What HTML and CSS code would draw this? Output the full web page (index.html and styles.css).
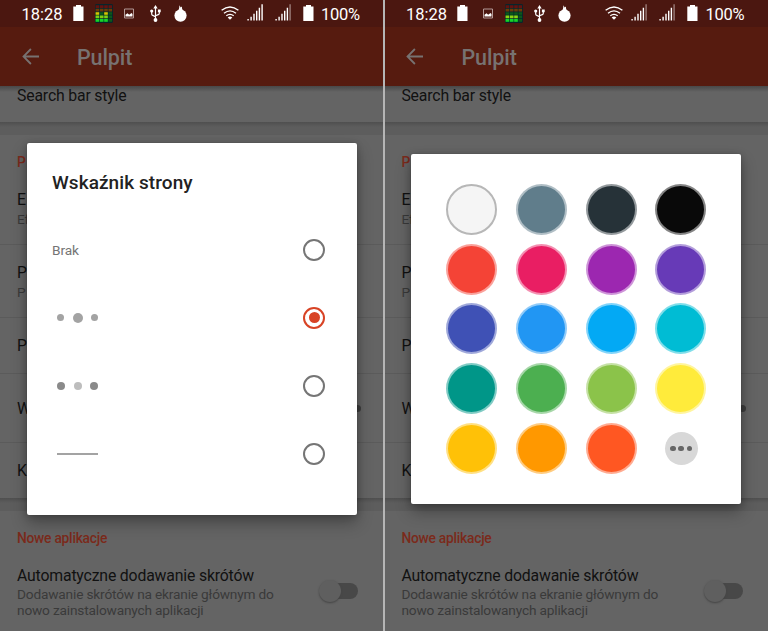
FILE: index.html
```html
<!DOCTYPE html>
<html lang="pl">
<head>
<meta charset="utf-8">
<title>Pulpit</title>
<link rel="stylesheet" href="styles.css">
</head>
<body>
<svg class="defs" aria-hidden="true">
  <symbol id="battery" viewBox="0 0 11 16"><path fill="#fff" d="M3 0h5v1.500h2.500V16H.3V1.500H3z"/></symbol>
  <symbol id="equalizer" viewBox="0 0 18 19">
    <rect width="18" height="19" rx="1.500" fill="#06262c"/>
    <path stroke="#65120f" stroke-width="2.600" stroke-dasharray="3.600 .7" d="M.6 2.600h16.800"/>
    <path stroke="#6d3a08" stroke-width="2.600" stroke-dasharray="3.600 .7" d="M.6 6.100h16.800"/>
    <path stroke="#0b591a" stroke-width="2.600" stroke-dasharray="3.600 .7" d="M.6 9.500h16.800M.6 12.900h16.800M.6 16.400h16.800"/>
    <path stroke="#14d52b" stroke-width="2.600" stroke-dasharray="3.600 .7" d="M.6 16.400h12.600"/>
  </symbol>
  <symbol id="picture" viewBox="0 0 10 11"><path fill="none" stroke="#b39a97" d="M.5 1h9v9h-9z"/><path fill="#fff" d="M1.500 8.500V6.800l2-1.600 1.700 1.500L7.500 5l1 1v2.500z"/></symbol>
  <symbol id="usb" viewBox="0 0 11 17"><g fill="none" stroke="#fff" stroke-width="1.200"><path d="M5.500 2v13M1.700 6v3.100q0 1 1 1.300l2.800 1.300M9.300 6v2.200q0 1-1 1.400l-2.800 1.200"/></g><path fill="#fff" d="M5.500 0 7.700 3.500H3.300zM7.900 4.500h2.800v2.800H7.900z"/><circle cx="1.700" cy="6" r="1.600" fill="#fff"/><circle cx="5.500" cy="15" r="1.900" fill="#fff"/></symbol>
  <symbol id="bulb" viewBox="0 0 13 17"><circle cx="6.500" cy="10.600" r="6.100" fill="#fff"/><path fill="#fff" d="M3.600 6C5 4.800 5.300 3 5.400.2L6.700 2.500 7.900 1.500Q7.600 4.700 9.500 6z"/></symbol>
  <symbol id="wifi" viewBox="0 0 18 14"><g fill="none" stroke="#fff" stroke-width="1.400"><path d="M.6 4.300Q9-2.400 17.400 4.300"/><path d="M3 7.200q6-4.700 12 0"/><path d="M5.300 9.800q3.700-2.800 7.400 0"/></g><path fill="#fff" d="M6.700 11.400q2.300-1.700 4.600 0L9 13.800z"/></symbol>
  <symbol id="signal" viewBox="0 0 16 17"><path fill="#fff" d="M.4 15h1.400v1.500H.4zM3.400 12.700h1.400v3.800H3.400zM6.300 9.700h1.400v6.800H6.300zM9 6.700h1.400v9.800H9zM11.700 3.700h1.400v12.800h-1.400z"/></symbol>
  <symbol id="back" viewBox="0 0 17 17"><path fill="none" stroke="#777271" stroke-width="1.800" d="M8.900 1 1.500 8.500 8.900 16M1.600 8.500H17"/></symbol>
</svg>

<main class="screens">
  <section class="phone">
    <header class="status">
      <span class="time">18:28</span>
      <svg class="i-batt"><use href="#battery"/></svg>
      <svg class="i-eq"><use href="#equalizer"/><path stroke="#d8c400" stroke-width="2.600" d="M.6 9.500h3.600M9.200 9.500h3.600"/><path stroke="#7fcf12" stroke-width="2.600" stroke-dasharray="3.600 .7" d="M.6 12.900h12.600"/></svg>
      <svg class="i-pic"><use href="#picture"/></svg>
      <svg class="i-usb"><use href="#usb"/></svg>
      <svg class="i-bulb"><use href="#bulb"/></svg>
      <svg class="i-wifi"><use href="#wifi"/></svg>
      <svg class="i-sig"><use href="#signal"/><path fill="#fff" d="M14.400.3h1.400v16.200h-1.400z"/></svg>
      <svg class="i-sig second"><use href="#signal"/><path fill="#9b7d79" d="M14.400.3h1.400v16.200h-1.400z"/></svg>
      <svg class="i-batt charge"><use href="#battery"/></svg>
      <span class="percent">100%</span>
    </header>
    <div class="appbar"><svg class="back"><use href="#back"/></svg><h1>Pulpit</h1></div>
    <div class="content">
      <div class="card search"><span class="label">Search bar style</span></div>
      <div class="gap"></div>
      <div class="card settings">
        <div class="category">P</div>
        <div class="row double first"><span class="label">E</span><span class="summary">Ef</span></div>
        <div class="row double"><span class="label">P</span><span class="summary">P</span></div>
        <div class="row"><span class="label">P</span></div>
        <div class="row tall"><span class="label">W</span><i class="dot"></i></div>
        <div class="row"><span class="label">K</span></div>
      </div>
      <div class="gap"></div>
      <div class="card apps">
        <div class="category">Nowe aplikacje</div>
        <div class="toggle-row">
          <div><div class="label">Automatyczne dodawanie skrótów</div><div class="summary">Dodawanie skrótów na ekranie głównym do<br>nowo zainstalowanych aplikacji</div></div>
          <span class="switch"></span>
        </div>
      </div>
    </div>
    <div class="dialog indicator">
      <h2>Wskaźnik strony</h2>
      <div class="option"><span>Brak</span><i class="radio"></i></div>
      <div class="option"><span class="dots big"><b></b><b></b><b></b></span><i class="radio on"></i></div>
      <div class="option"><span class="dots fade"><b></b><b></b><b></b></span><i class="radio"></i></div>
      <div class="option"><span class="line"></span><i class="radio"></i></div>
    </div>
  </section>

  <div class="separator"></div>

  <section class="phone right">
    <header class="status">
      <span class="time">18:28</span>
      <svg class="i-batt"><use href="#battery"/></svg>
      <svg class="i-pic"><use href="#picture"/></svg>
      <svg class="i-eq"><use href="#equalizer"/><path stroke="#8cd313" stroke-width="2.600" stroke-dasharray="3.600 .7" d="M.6 12.900h12.600"/></svg>
      <svg class="i-usb"><use href="#usb"/></svg>
      <svg class="i-bulb"><use href="#bulb"/></svg>
      <svg class="i-wifi"><use href="#wifi"/></svg>
      <svg class="i-sig"><use href="#signal"/><path fill="#9b7d79" d="M14.400.3h1.400v16.200h-1.400z"/></svg>
      <svg class="i-sig second"><use href="#signal"/><path fill="#9b7d79" d="M14.400.3h1.400v16.200h-1.400z"/></svg>
      <svg class="i-batt charge"><use href="#battery"/></svg>
      <span class="percent">100%</span>
    </header>
    <div class="appbar"><svg class="back"><use href="#back"/></svg><h1>Pulpit</h1></div>
    <div class="content">
      <div class="card search"><span class="label">Search bar style</span></div>
      <div class="gap"></div>
      <div class="card settings">
        <div class="category">P</div>
        <div class="row double first"><span class="label">E</span><span class="summary">Ef</span></div>
        <div class="row double"><span class="label">P</span><span class="summary">P</span></div>
        <div class="row"><span class="label">P</span></div>
        <div class="row tall"><span class="label">W</span><i class="dot"></i></div>
        <div class="row"><span class="label">K</span></div>
      </div>
      <div class="gap"></div>
      <div class="card apps">
        <div class="category">Nowe aplikacje</div>
        <div class="toggle-row">
          <div><div class="label">Automatyczne dodawanie skrótów</div><div class="summary">Dodawanie skrótów na ekranie głównym do<br>nowo zainstalowanych aplikacji</div></div>
          <span class="switch"></span>
        </div>
      </div>
    </div>
    <div class="dialog palette">
      <i class="swatch white"></i><i class="swatch slate"></i><i class="swatch charcoal"></i><i class="swatch black"></i>
      <i class="swatch red"></i><i class="swatch pink"></i><i class="swatch purple"></i><i class="swatch violet"></i>
      <i class="swatch indigo"></i><i class="swatch blue"></i><i class="swatch sky"></i><i class="swatch cyan"></i>
      <i class="swatch teal"></i><i class="swatch green"></i><i class="swatch lime"></i><i class="swatch yellow"></i>
      <i class="swatch amber"></i><i class="swatch orange"></i><i class="swatch deep"></i><span class="more"><b></b><b></b><b></b></span>
    </div>
  </section>
</main>
</body>
</html>
```

FILE: styles.css
```css
* { box-sizing: border-box; }
body { margin: 0; font-family: Roboto, "Liberation Sans", sans-serif; background: #646464; }
h1, h2 { margin: 0; font-weight: 500; }
.defs { position: absolute; width: 0; height: 0; }
.screens { display: grid; grid-template-columns: 383px 2px 383px; height: 631px; overflow: hidden; }
.separator { background: #b5b5b5; z-index: 2; }
.phone { position: relative; height: 631px; }
.phone.right { margin-left: -.6px; }

.status { display: flex; align-items: flex-start; height: 27px; padding-left: 21.500px; background: #4b1710; color: #fff; font-size: 16.500px; }
.status svg { flex: none; display: block; }
.time { width: 51.500px; line-height: 19px; margin-top: 5px; }
.i-batt { width: 11px; height: 16px; margin-top: 5px; }
.i-eq { width: 18px; height: 19px; margin: 4px 0 0 11px; }
.i-pic { width: 10px; height: 11px; margin: 8px 0 0 11px; }
.i-usb { width: 11px; height: 17px; margin: 5px 0 0 16px; }
.right .i-pic { margin-left: 15px; }
.right .i-eq { margin-left: 12px; }
.right .i-usb { margin-left: 11px; }
.i-bulb { width: 13px; height: 17px; margin: 5px 0 0 13px; }
.i-wifi { width: 18px; height: 14px; margin: 6px 0 0 34px; }
.i-sig { width: 16px; height: 17px; margin: 3.500px 0 0 8px; }
.i-sig.second { margin-left: 12px; }
.i-batt.charge { margin-left: 12px; }
.percent { margin: 5px 0 0 7px; line-height: 19px; letter-spacing: -.25px; }

.appbar { display: flex; align-items: center; height: 59px; padding: 0 0 1px 21.500px; background: #561b0f; color: #777271; }
.back { width: 17px; height: 17px; }
.appbar h1 { margin-left: 38.500px; font-size: 21.500px; line-height: 30px; padding-top: 4px; letter-spacing: -.1px; }

.content { height: 545px; overflow: hidden; background: linear-gradient(#484848, #646464) no-repeat 0 0 / 100% 6px; }
.label { font-size: 15.800px; line-height: 19px; color: #111; letter-spacing: -.17px; }
.summary { font-size: 13.700px; line-height: 15.600px; color: #3a3a3a; letter-spacing: -.18px; }
.search { height: 36px; padding-left: 17px; }
.search .label { display: block; }
.gap { height: 13px; background: linear-gradient(#4f4f4f, #5d5d5d 5px); }
.settings { height: 363px; }
.category { padding-left: 17px; font-size: 13.800px; font-weight: 500; line-height: 17px; color: #7b2a1b; letter-spacing: -.25px; }
.settings .category { padding-top: 19px; height: 46px; }
.row { display: flex; align-items: center; height: 56px; padding: 0 22px 0 17px; border-bottom: 1px solid #5b5b5b; }
.row:last-child { border-bottom: 0; }
.row.double { flex-direction: column; align-items: flex-start; justify-content: center; height: 73px; padding-top: 1px; }
.row.double .summary { margin-top: 3px; }
.row.double.first { height: 64px; padding-bottom: 9px; }
.row.tall { height: 69px; }
.row:last-child { padding-bottom: 1px; }
.dot { width: 7px; height: 7px; margin-left: auto; border-radius: 50%; background: #3d3d3d; }
.apps .category { padding-top: 19px; }
.toggle-row { display: flex; justify-content: space-between; padding: 19px 25px 0 17px; }
.toggle-row .summary { margin-top: 2px; }
.switch { position: relative; width: 36px; height: 16px; margin-top: 17px; border-radius: 8px; background: #484848; }
.switch::before { content: ""; position: absolute; left: -3px; top: -3px; width: 22px; height: 22px; border-radius: 50%; background: #5f5f5f; box-shadow: 0 1px 2px #444; }

.dialog { position: absolute; background: #fff; border-radius: 2px; box-shadow: 0 8px 16px rgba(0,0,0,.3), 0 1px 7px rgba(0,0,0,.2), 0 0 1px rgba(0,0,0,.3); }
.indicator { left: 26.500px; top: 142.500px; width: 330.300px; height: 372px; padding: 27px 31.500px 0 25.500px; }
.indicator h2 { height: 46.200px; font-size: 19px; line-height: 26px; color: #222; letter-spacing: .08px; }
.option { display: flex; align-items: center; justify-content: space-between; height: 68.200px; font-size: 13.700px; color: #757575; letter-spacing: -.1px; }
.radio { display: flex; width: 22px; height: 22px; border: 2px solid #757575; border-radius: 50%; }
.radio.on { border-color: #d84325; }
.radio.on::after { content: ""; width: 11px; height: 11px; margin: auto; border-radius: 50%; background: #d84325; }
.dots { display: flex; align-items: center; justify-content: space-between; width: 41px; margin-left: 5px; }
.dots b { width: 7px; height: 7px; border-radius: 50%; background: #a3a3a3; }
.dots.big b:nth-child(2) { width: 10px; height: 10px; }
.dots.fade b { width: 8px; height: 8px; background: #8a8a8a; }
.dots.fade b:nth-child(2) { background: #bdbdbd; }
.line { width: 41px; height: 2px; margin-left: 5px; background: #a3a3a3; }

.palette { left: 26.600px; top: 154px; width: 330.300px; height: 349.700px; padding: 30px 0 0 35px; display: grid; grid-template-columns: repeat(4, 51px); grid-auto-rows: 51.500px; column-gap: 18.800px; row-gap: 8.200px; align-content: start; }
.swatch { width: 51px; height: 51px; border: 2px solid rgba(255,255,255,.5); border-radius: 50%; background: var(--tone); background-clip: border-box; background-origin: border-box; }
.white { --tone: #f5f5f5; border-color: #b7b7b7; }
.slate { --tone: #607d8b; }
.charcoal { --tone: #263238; }
.black { --tone: #090909; }
.red { --tone: #f44336; }
.pink { --tone: #e91e63; }
.purple { --tone: #9c27b0; }
.violet { --tone: #673ab7; }
.indigo { --tone: #3f51b5; }
.blue { --tone: #2196f3; }
.sky { --tone: #03a9f4; }
.cyan { --tone: #00bcd4; }
.teal { --tone: #009688; }
.green { --tone: #4caf50; }
.lime { --tone: #8bc34a; }
.yellow { --tone: #ffeb3b; }
.amber { --tone: #ffc107; }
.orange { --tone: #ff9800; }
.deep { --tone: #ff5722; }
.more { display: flex; align-items: center; justify-content: center; gap: 2.600px; width: 33px; height: 33px; margin: 9px 0 0 9.300px; border-radius: 50%; background: #d8d8d8; }
.more b { width: 5.500px; height: 5.500px; border-radius: 50%; background: #666; }
```
